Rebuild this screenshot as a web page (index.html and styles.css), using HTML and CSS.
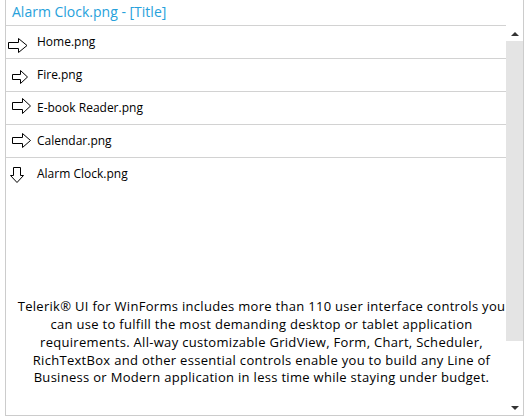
FILE: index.html
```html
<!DOCTYPE html>
<html>
<head>
<meta charset="utf-8">
<link rel="stylesheet" href="styles.css">
</head>
<body>
<div class="panel">
  <div class="title">Alarm Clock.png - [Title]</div>
  <div class="list">
    <div class="items">
      <div class="item">
        <div class="icon-cell"><svg class="ic ic-home" width="20" height="15" viewBox="0 0 20 15"><polygon points="0.5,4.5 10.5,4.5 10.5,0.5 19,7.5 10.5,14.5 10.5,10.5 0.5,10.5" fill="#fff" stroke="#000" stroke-width="1"/></svg></div>
        <span class="label">Home.png</span>
      </div>
      <div class="item">
        <div class="icon-cell"><svg class="ic ic-fire" width="16" height="14" viewBox="0 0 16 14"><polygon points="0.5,4.5 8.5,4.5 8.5,0.5 15.5,7 8.5,13.5 8.5,9.5 0.5,9.5" fill="#fff" stroke="#000" stroke-width="1"/></svg></div>
        <span class="label">Fire.png</span>
      </div>
      <div class="item">
        <div class="icon-cell"><svg class="ic ic-ebook" width="19" height="16" viewBox="0 0 19 16"><polygon points="0.5,4.5 10.5,4.5 10.5,0.5 18.5,8 10.5,15.5 10.5,11.5 0.5,11.5" fill="#fff" stroke="#000" stroke-width="1"/></svg></div>
        <span class="label">E-book Reader.png</span>
      </div>
      <div class="item">
        <div class="icon-cell"><svg class="ic ic-cal" width="19" height="15" viewBox="0 0 19 15"><polygon points="0.5,4.5 10.5,4.5 10.5,0.5 18.5,7.5 10.5,14.5 10.5,10.5 0.5,10.5" fill="#fff" stroke="#000" stroke-width="1"/></svg></div>
        <span class="label">Calendar.png</span>
      </div>
      <div class="item expanded">
        <div class="item-head">
          <div class="icon-cell"><svg class="ic ic-alarm" width="14" height="16" viewBox="0 0 14 16"><polygon points="3.5,0.5 10.5,0.5 10.5,8.5 13.5,8.5 7,15.5 0.5,8.5 3.5,8.5" fill="#fff" stroke="#000" stroke-width="1"/></svg></div>
          <span class="label">Alarm Clock.png</span>
        </div>
        <p class="desc">Telerik® UI for WinForms includes more than 110 user interface controls you<br>can use to fulfill the most demanding desktop or tablet application<br>requirements. All-way customizable GridView, Form, Chart, Scheduler,<br>RichTextBox and other essential controls enable you to build any Line of<br>Business or Modern application in less time while staying under budget.</p>
      </div>
    </div>
    <div class="scrollbar">
      <div class="sb-btn"><span class="arrow-up"></span></div>
      <div class="sb-track"><div class="sb-thumb"></div></div>
      <div class="sb-btn"><span class="arrow-down"></span></div>
    </div>
  </div>
</div>
</body>
</html>
```
FILE: styles.css
```css
html, body {
  margin: 0;
  padding: 0;
  background: #ffffff;
}
body {
  font-family: "Open Sans", "Noto Sans", sans-serif;
  color: #000;
}
.panel {
  margin-left: 5px;
  width: 517px;
  height: 415px;
  border: 1px solid #cccccc;
  border-top: none;
  display: flex;
  flex-direction: column;
}
.title {
  height: 25px;
  line-height: 24px;
  padding-left: 6px;
  font-size: 14px;
  color: #27a1db;
}
.list {
  flex: 1;
  display: flex;
  min-height: 0;
}
.items {
  flex: 1;
  display: flex;
  flex-direction: column;
}
.item {
  height: 32px;
  border-top: 1px solid #d2d2d2;
  display: flex;
  align-items: center;
  font-size: 12px;
}
.item.expanded {
  flex: 1;
  flex-direction: column;
  align-items: stretch;
}
.item-head {
  height: 32px;
  display: flex;
  align-items: center;
}
.icon-cell {
  width: 31px;
  height: 32px;
  flex: none;
  display: flex;
  align-items: flex-start;
}
.ic { display: block; }
.ic-home { margin: 12px 0 0 2px; }
.ic-fire { margin: 11px 0 0 6px; }
.ic-ebook { margin: 6px 0 0 6px; }
.ic-cal { margin: 8px 0 0 6px; }
.ic-alarm { margin: 9px 0 0 4px; }
.label {
  font-size: 12px;
  line-height: 16px;
}
.desc {
  margin: auto 0 0 0;
  padding: 0 0 28px 11px;
  text-align: center;
  font-size: 13px;
  letter-spacing: 0.3px;
  line-height: 17.75px;
  white-space: nowrap;
}
.scrollbar {
  width: 17px;
  flex: none;
  display: flex;
  flex-direction: column;
  padding-top: 1px;
}
.sb-btn {
  height: 15px;
  display: flex;
  align-items: center;
  justify-content: center;
}
.sb-track {
  flex: 1;
  display: flex;
  flex-direction: column;
}
.sb-thumb {
  height: 300px;
  background: #e4e4e4;
}
.arrow-up {
  width: 0;
  height: 0;
  border-left: 4px solid transparent;
  border-right: 4px solid transparent;
  border-bottom: 4px solid #333;
}
.arrow-down {
  width: 0;
  height: 0;
  border-left: 4px solid transparent;
  border-right: 4px solid transparent;
  border-top: 4px solid #333;
}
```
